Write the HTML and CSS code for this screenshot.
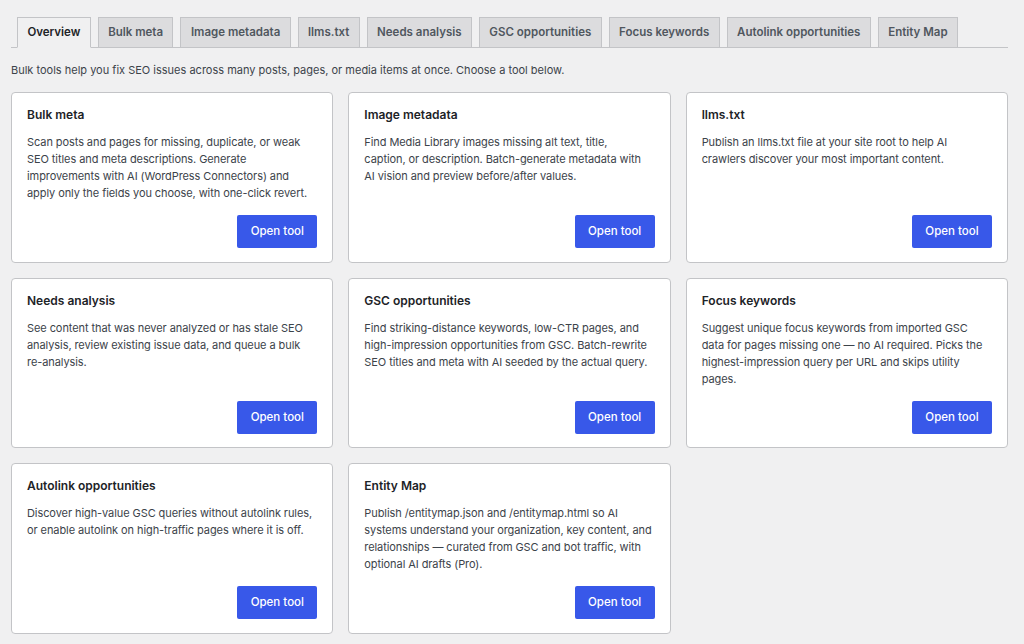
FILE: index.html
```html
<!DOCTYPE html>
<html lang="en">
<head>
<meta charset="utf-8">
<title>Bulk tools</title>
<link rel="stylesheet" href="styles.css">
</head>
<body>
<div class="wrap">
  <nav class="tabs">
    <a href="#" class="tab active">Overview</a>
    <a href="#" class="tab">Bulk meta</a>
    <a href="#" class="tab">Image metadata</a>
    <a href="#" class="tab">llms.txt</a>
    <a href="#" class="tab">Needs analysis</a>
    <a href="#" class="tab">GSC opportunities</a>
    <a href="#" class="tab">Focus keywords</a>
    <a href="#" class="tab">Autolink opportunities</a>
    <a href="#" class="tab">Entity Map</a>
  </nav>

  <p class="intro">Bulk tools help you fix SEO issues across many posts, pages, or media items at once. Choose a tool below.</p>

  <div class="grid">
    <div class="card">
      <h3>Bulk meta</h3>
      <p>Scan posts and pages for missing, duplicate, or weak SEO titles and meta descriptions. Generate improvements with AI (WordPress Connectors) and apply only the fields you choose, with one-click revert.</p>
      <div class="actions"><a href="#" class="btn">Open tool</a></div>
    </div>
    <div class="card">
      <h3>Image metadata</h3>
      <p>Find Media Library images missing alt text, title,<br>caption, or description. Batch-generate metadata with<br>AI vision and preview before/after values.</p>
      <div class="actions"><a href="#" class="btn">Open tool</a></div>
    </div>
    <div class="card">
      <h3>llms.txt</h3>
      <p>Publish an llms.txt file at your site root to help AI crawlers discover your most important content.</p>
      <div class="actions"><a href="#" class="btn">Open tool</a></div>
    </div>
    <div class="card">
      <h3>Needs analysis</h3>
      <p>See content that was never analyzed or has stale SEO analysis, review existing issue data, and queue a bulk re-analysis.</p>
      <div class="actions"><a href="#" class="btn">Open tool</a></div>
    </div>
    <div class="card">
      <h3>GSC opportunities</h3>
      <p>Find striking-distance keywords, low-CTR pages, and high-impression opportunities from GSC. Batch-rewrite SEO titles and meta with AI seeded by the actual query.</p>
      <div class="actions"><a href="#" class="btn">Open tool</a></div>
    </div>
    <div class="card">
      <h3>Focus keywords</h3>
      <p>Suggest unique focus keywords from imported GSC data for pages missing one &mdash; no AI required. Picks the highest-impression query per URL and skips utility pages.</p>
      <div class="actions"><a href="#" class="btn">Open tool</a></div>
    </div>
    <div class="card">
      <h3>Autolink opportunities</h3>
      <p>Discover high-value GSC queries without autolink rules, or enable autolink on high-traffic pages where it is off.</p>
      <div class="actions"><a href="#" class="btn">Open tool</a></div>
    </div>
    <div class="card">
      <h3>Entity Map</h3>
      <p>Publish /entitymap.json and /entitymap.html so AI systems understand your organization, key content, and relationships &mdash; curated from GSC and bot traffic, with optional AI drafts (Pro).</p>
      <div class="actions"><a href="#" class="btn">Open tool</a></div>
    </div>
  </div>
</div>
</body>
</html>
```

FILE: styles.css
```css
html,body{margin:0;padding:0;}
body{background:#f0f0f1;font-family:Inter,"Liberation Sans",sans-serif;color:#3c434a;}
p,h3{margin:0;}

.wrap{width:997px;margin-left:11px;padding-top:17px;}

.tabs{display:flex;gap:7px;padding-left:6px;border-bottom:1px solid #c3c4c7;}
.tab{display:block;flex-shrink:0;white-space:nowrap;height:29px;padding:0 9.4px;margin-bottom:-1px;font:600 11.5px/29px Inter,"Liberation Sans",sans-serif;color:#50575e;text-decoration:none;background:#dcdcde;border:1px solid #c3c4c7;border-bottom:none;}
.tab.active{background:#f0f0f1;color:#1d2327;border-bottom:1px solid #f0f0f1;}

.intro{font-size:11px;line-height:18px;margin:13px 0 13px;color:#3c434a;}

.grid{display:grid;grid-template-columns:repeat(3,1fr);gap:15px;}
.card{display:flex;flex-direction:column;background:#fff;border:1px solid #c3c4c7;border-radius:4px;padding:13px 15px 13.5px;}
.card h3{font-size:12px;font-weight:600;line-height:18px;color:#1d2327;margin-bottom:10px;}
.card p{font-size:11px;line-height:17px;letter-spacing:-0.08px;color:#3c434a;}
.actions{margin-top:auto;padding-top:13px;display:flex;justify-content:flex-end;}
.btn{display:block;width:80px;height:33px;line-height:33px;text-align:center;background:#3858e9;color:#fff;font-size:11.5px;font-weight:500;text-decoration:none;border-radius:2px;}
```
